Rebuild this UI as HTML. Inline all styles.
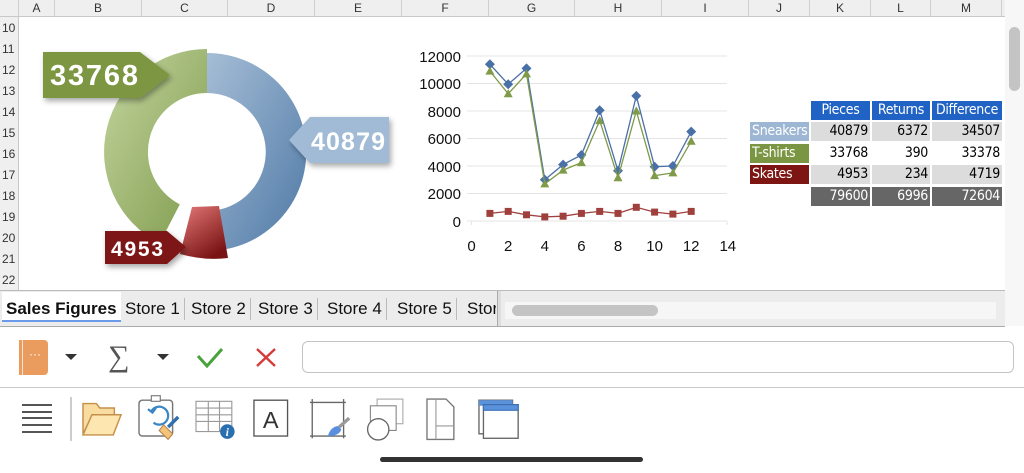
<!DOCTYPE html>
<html><head><meta charset="utf-8"><style>
*{margin:0;padding:0;box-sizing:border-box}
body{width:1024px;height:473px;overflow:hidden;background:#fff;font-family:"Liberation Sans",sans-serif;position:relative}
.abs{position:absolute}
.ch{position:absolute;top:0;height:16px;font-size:12px;color:#333;text-align:center;line-height:16px;border-right:1px solid #d0d0d0}
.rh{position:absolute;left:0;width:19px;font-size:12px;color:#333;line-height:21px;text-align:left;padding-left:2px;height:21px}
.c{position:absolute;font-size:14px;text-align:right;padding-right:2px;line-height:19px;height:19px;font-family:"DejaVu Sans Condensed","Liberation Sans",sans-serif;letter-spacing:-0.3px}
.tab{position:absolute;top:296px;height:26px;font-size:17px;line-height:26px;color:#111;border-right:1px solid #bbb;padding:0 4px}
</style></head><body>
<div class="abs" style="left:0;top:0;width:1005px;height:17px;background:#efefef;border-bottom:1px solid #c8c8c8"></div>
<div class="ch" style="left:0;width:19px"></div>
<div class="ch" style="left:19px;width:36px">A</div>
<div class="ch" style="left:55px;width:87px">B</div>
<div class="ch" style="left:142px;width:86px">C</div>
<div class="ch" style="left:228px;width:87px">D</div>
<div class="ch" style="left:315px;width:87px">E</div>
<div class="ch" style="left:402px;width:87px">F</div>
<div class="ch" style="left:489px;width:86px">G</div>
<div class="ch" style="left:575px;width:87px">H</div>
<div class="ch" style="left:662px;width:87px">I</div>
<div class="ch" style="left:749px;width:61px">J</div>
<div class="ch" style="left:810px;width:61px">K</div>
<div class="ch" style="left:871px;width:60px">L</div>
<div class="ch" style="left:931px;width:71px">M</div>
<div class="abs" style="left:0;top:17px;width:19px;height:273px;background:#efefef;border-right:1px solid #c8c8c8"></div>
<div class="rh" style="top:18px">10</div><div class="rh" style="top:39px">11</div><div class="rh" style="top:60px">12</div><div class="rh" style="top:81px">13</div><div class="rh" style="top:102px">14</div><div class="rh" style="top:123px">15</div><div class="rh" style="top:144px">16</div><div class="rh" style="top:165px">17</div><div class="rh" style="top:186px">18</div><div class="rh" style="top:207px">19</div><div class="rh" style="top:228px">20</div><div class="rh" style="top:249px">21</div><div class="rh" style="top:270px">22</div>
<div class="abs" style="left:1005px;top:0;width:19px;height:326px;background:#f7f7f7"></div>
<div class="abs" style="left:1009px;top:27px;width:11px;height:64px;background:#c4c4c4;border-radius:6px"></div>

<svg class="abs" style="left:0;top:0" width="1005" height="290">
<defs>
<linearGradient id="gb" x1="0" y1="0" x2="1" y2="1"><stop offset="0" stop-color="#a9c0d8"/><stop offset="1" stop-color="#4f79a6"/></linearGradient>
<linearGradient id="gg" x1="0" y1="0" x2="1" y2="1"><stop offset="0" stop-color="#c4d5a0"/><stop offset="1" stop-color="#7e9a4a"/></linearGradient>
<linearGradient id="gr" x1="0" y1="0" x2="0.6" y2="1"><stop offset="0" stop-color="#e57a7a"/><stop offset="1" stop-color="#7a1414"/></linearGradient>
<filter id="sh" x="-20%" y="-20%" width="140%" height="150%"><feDropShadow dx="2" dy="3" stdDeviation="3" flood-opacity="0.35"/></filter>
</defs>
<path d="M207,53 A99,99 0 1 1 198.4,250.6 L201.9,210.8 A59,59 0 1 0 207,93 Z" fill="url(#gb)"/>
<path d="M159.6,243.4 A103,103 0 0 1 207,49 L207,93 A59,59 0 0 0 179.8,204.4 Z" fill="url(#gg)"/>
<path d="M192,207 L219,206 L228,258 Q205,261 180,254 Z" fill="url(#gr)"/>
<g filter="url(#sh)">
<path d="M43,52 L140,52 L170,75 L140,98 L43,98 Z" fill="#7b9642"/>
<path d="M310,117 L389,117 L389,163 L310,163 L289,140 Z" fill="#a1bbd6"/>
<path d="M105,231 L167,231 L186,247 L167,264 L105,264 Z" fill="#7d1512"/>
</g>
<text x="50" y="85" font-family="Liberation Sans" font-weight="bold" font-size="29" fill="#fff" textLength="88">33768</text>
<text x="311" y="150" font-family="Liberation Sans" font-weight="bold" font-size="25" fill="#fff" textLength="74">40879</text>
<text x="111" y="256" font-family="Liberation Sans" font-weight="bold" font-size="21" fill="#fff" textLength="52">4953</text>
<g stroke="#e4e4e4" stroke-width="1">
<line x1="467" y1="56" x2="727" y2="56"/><line x1="467" y1="83.5" x2="727" y2="83.5"/><line x1="467" y1="111" x2="727" y2="111"/><line x1="467" y1="138.5" x2="727" y2="138.5"/><line x1="467" y1="166" x2="727" y2="166"/><line x1="467" y1="193.5" x2="727" y2="193.5"/><line x1="467" y1="221" x2="727" y2="221"/>
<line x1="471.6" y1="221" x2="471.6" y2="225"/><line x1="727" y1="221" x2="727" y2="225"/>
</g>
<g font-family="Liberation Sans" font-size="15" fill="#111" text-anchor="end">
<text x="461" y="62">12000</text><text x="461" y="89">10000</text><text x="461" y="117">8000</text><text x="461" y="144">6000</text><text x="461" y="172">4000</text><text x="461" y="199">2000</text><text x="461" y="227">0</text>
</g>
<g font-family="Liberation Sans" font-size="15" fill="#111" text-anchor="middle">
<text x="471.6" y="251">0</text><text x="508.2" y="251">2</text><text x="544.8" y="251">4</text><text x="581.4" y="251">6</text><text x="618" y="251">8</text><text x="654.6" y="251">10</text><text x="691.2" y="251">12</text><text x="727.8" y="251">14</text>
</g>
<polyline fill="none" stroke="#4a70a8" stroke-width="1.3" points="489.9,64.3 508.2,84.2 526.5,68.4 544.8,179.8 563.1,164.6 581.4,155 599.7,110.3 618,170.8 636.3,95.9 654.6,166.7 672.9,166 691.2,131.6"/>
<path fill="#4a70a8" d="M489.9,59.3l5,5-5,5-5-5z M508.2,79.2l5,5-5,5-5-5z M526.5,63.4l5,5-5,5-5-5z M544.8,174.8l5,5-5,5-5-5z M563.1,159.6l5,5-5,5-5-5z M581.4,150l5,5-5,5-5-5z M599.7,105.3l5,5-5,5-5-5z M618,165.8l5,5-5,5-5-5z M636.3,90.9l5,5-5,5-5-5z M654.6,161.7l5,5-5,5-5-5z M672.9,161l5,5-5,5-5-5z M691.2,126.6l5,5-5,5-5-5z"/>
<polyline fill="none" stroke="#7f9a48" stroke-width="1.3" points="489.9,71.1 508.2,93.8 526.5,73.9 544.8,183.9 563.1,170.1 581.4,162.6 599.7,120.6 618,177.7 636.3,111 654.6,175.6 672.9,172.9 691.2,141.3"/>
<path fill="#7f9a48" d="M489.9,66.6l4.5,8h-9z M508.2,89.3l4.5,8h-9z M526.5,69.4l4.5,8h-9z M544.8,179.4l4.5,8h-9z M563.1,165.6l4.5,8h-9z M581.4,158.1l4.5,8h-9z M599.7,116.1l4.5,8h-9z M618,173.2l4.5,8h-9z M636.3,106.5l4.5,8h-9z M654.6,171.1l4.5,8h-9z M672.9,168.4l4.5,8h-9z M691.2,136.8l4.5,8h-9z"/>
<polyline fill="none" stroke="#a0403c" stroke-width="1.3" points="489.9,213.4 508.2,211.4 526.5,214.8 544.8,216.9 563.1,216.2 581.4,213.4 599.7,211.4 618,213.4 636.3,207.3 654.6,212.1 672.9,214.1 691.2,211.4"/>
<g fill="#a0403c">
<rect x="486.4" y="209.9" width="7" height="7"/><rect x="504.7" y="207.9" width="7" height="7"/><rect x="523" y="211.3" width="7" height="7"/><rect x="541.3" y="213.4" width="7" height="7"/><rect x="559.6" y="212.7" width="7" height="7"/><rect x="577.9" y="209.9" width="7" height="7"/><rect x="596.2" y="207.9" width="7" height="7"/><rect x="614.5" y="209.9" width="7" height="7"/><rect x="632.8" y="203.8" width="7" height="7"/><rect x="651.1" y="208.6" width="7" height="7"/><rect x="669.4" y="210.6" width="7" height="7"/><rect x="687.7" y="207.9" width="7" height="7"/>
</g>
</svg>

<div class="c" style="left:811px;top:101px;width:59px;background:#2163c4;color:#fff;text-align:center;padding:0">Pieces</div>
<div class="c" style="left:872px;top:101px;width:58px;background:#2163c4;color:#fff;text-align:center;padding:0">Returns</div>
<div class="c" style="left:932px;top:101px;width:70px;background:#2163c4;color:#fff;text-align:center;padding:0">Difference</div>
<div class="c" style="left:750px;top:122px;width:59px;background:#9db6d3;color:#fff;text-align:left;padding-left:2px">Sneakers</div>
<div class="c" style="left:750px;top:144px;width:59px;background:#7b9642;color:#fff;text-align:left;padding-left:2px">T-shirts</div>
<div class="c" style="left:750px;top:165px;width:59px;background:#7d1512;color:#fff;text-align:left;padding-left:2px">Skates</div>
<div class="c" style="left:811px;top:122px;width:59px;background:#dcdcdc">40879</div>
<div class="c" style="left:872px;top:122px;width:58px;background:#dcdcdc">6372</div>
<div class="c" style="left:932px;top:122px;width:70px;background:#dcdcdc">34507</div>
<div class="c" style="left:811px;top:144px;width:59px">33768</div>
<div class="c" style="left:872px;top:144px;width:58px">390</div>
<div class="c" style="left:932px;top:144px;width:70px">33378</div>
<div class="c" style="left:811px;top:165px;width:59px;background:#dcdcdc">4953</div>
<div class="c" style="left:872px;top:165px;width:58px;background:#dcdcdc">234</div>
<div class="c" style="left:932px;top:165px;width:70px;background:#dcdcdc">4719</div>
<div class="c" style="left:811px;top:187px;width:59px;background:#666;color:#fff">79600</div>
<div class="c" style="left:872px;top:187px;width:58px;background:#666;color:#fff">6996</div>
<div class="c" style="left:932px;top:187px;width:70px;background:#666;color:#fff">72604</div>

<div class="abs" style="left:0;top:290px;width:1005px;height:37px;background:#ececec;border-top:1px solid #bbb;border-bottom:1px solid #aaa"></div>
<div class="abs" style="left:2px;top:292px;width:119px;height:30px;background:#fff;border-bottom:2px solid #6b9be8"></div>
<div class="tab" style="left:2px;font-weight:bold;border:none">Sales Figures</div>
<div class="tab" style="left:121px;top:298px;height:22px;line-height:22px">Store 1</div>
<div class="tab" style="left:187px;top:298px;height:22px;line-height:22px">Store 2</div>
<div class="tab" style="left:254px;top:298px;height:22px;line-height:22px">Store 3</div>
<div class="tab" style="left:323px;top:298px;height:22px;line-height:22px">Store 4</div>
<div class="tab" style="left:393px;top:298px;height:22px;line-height:22px">Store 5</div>
<div class="tab" style="left:462px;top:298px;height:22px;line-height:22px;border:none;width:34px;overflow:hidden;padding-left:5px">Store 6</div>
<div class="abs" style="left:497px;top:291px;width:4px;height:35px;background:#ddd;border-left:1px solid #aaa"></div>
<div class="abs" style="left:505px;top:302px;width:491px;height:17px;background:#f6f6f6"></div>
<div class="abs" style="left:512px;top:305px;width:146px;height:11px;background:#c4c4c4;border-radius:6px"></div>

<div class="abs" style="left:19px;top:340px;width:29px;height:35px;background:#e99c5e;border-radius:0 4px 4px 0"></div>
<div class="abs" style="left:22px;top:340px;width:1px;height:35px;background:#fff;opacity:.7"></div>
<div class="abs" style="left:29px;top:347px;color:#fff;font-size:12px">···</div>
<div class="abs" style="left:65px;top:354px;border:6px solid transparent;border-top:6px solid #333;border-bottom:none"></div>
<div class="abs" style="left:108px;top:340px;font-size:30px;color:#555;font-family:'Liberation Serif',serif">∑</div>
<div class="abs" style="left:157px;top:354px;border:6px solid transparent;border-top:6px solid #333;border-bottom:none"></div>
<svg class="abs" style="left:195px;top:344px" width="90" height="28"><path d="M3,12 L12,22 L27,5" fill="none" stroke="#48a33a" stroke-width="3"/><path d="M62,5 L80,22 M80,5 L62,22" stroke="#d83a3a" stroke-width="2.4"/></svg>
<div class="abs" style="left:302px;top:341px;width:712px;height:32px;border:1px solid #c4c4c4;border-radius:6px"></div>
<div class="abs" style="left:0;top:387px;width:1024px;height:1px;background:#c8c8c8"></div>

<svg class="abs" style="left:0;top:392px" width="540" height="58">
<g stroke="#555" stroke-width="2"><line x1="22" y1="13" x2="52" y2="13"/><line x1="22" y1="20" x2="52" y2="20"/><line x1="22" y1="26" x2="52" y2="26"/><line x1="22" y1="33" x2="52" y2="33"/><line x1="22" y1="40" x2="52" y2="40"/></g>
<line x1="71" y1="5" x2="71" y2="49" stroke="#bbb" stroke-width="1.5"/>
<g transform="translate(-5.5,-3) scale(1.12)">
<path d="M79,40 L79,13 L91,13 L94,17 L107,17 L107,23 L88,23 Z" fill="#f9dca0" stroke="#c58f4a" stroke-width="1.3"/>
<path d="M79,41 L87,23 L113,23 L106,41 Z" fill="#fde6b0" stroke="#c58f4a" stroke-width="1.3"/>
</g>
<g transform="translate(-6.6,-3) scale(1.12)">
<rect x="130" y="10" width="30" height="32" rx="3" fill="#fff" stroke="#777" stroke-width="1.3"/>
<rect x="141" y="6" width="8" height="5" fill="#fff" stroke="#777"/>
<path d="M143,30 A8,8 0 1 0 141,20" fill="none" stroke="#3b86c4" stroke-width="2"/><path d="M138,18 L142,21 L145,17" fill="none" stroke="#3b86c4" stroke-width="2"/>
<path d="M152,32 L160,40 L156,45 L148,37 Z" fill="#f4c27a" stroke="#b68a4c"/><line x1="156" y1="34" x2="165" y2="25" stroke="#2f6fae" stroke-width="3"/>
</g>
<g transform="translate(-10.1,-3) scale(1.12)">
<g stroke="#999" fill="none"><rect x="184" y="11" width="32" height="27"/><line x1="184" y1="17" x2="216" y2="17"/><line x1="184" y1="23" x2="216" y2="23"/><line x1="184" y1="29" x2="216" y2="29"/><line x1="195" y1="11" x2="195" y2="38"/><line x1="205" y1="11" x2="205" y2="38"/></g>
<circle cx="212" cy="38" r="6.5" fill="#2a70b0"/><text x="212" y="42" font-size="10" font-weight="bold" font-style="italic" fill="#fff" text-anchor="middle" font-family="Liberation Serif">i</text>
</g>
<g transform="translate(-12.6,-3) scale(1.12)">
<rect x="238" y="10" width="30" height="32" fill="#fff" stroke="#555" stroke-width="1.2"/><text x="253" y="35" font-size="21" fill="#333" text-anchor="middle" font-family="Liberation Sans">A</text>
</g>
<g transform="translate(-14.8,-3) scale(1.12)">
<g stroke="#666" stroke-width="1.2"><line x1="290" y1="12" x2="322" y2="12"/><line x1="292" y1="9" x2="292" y2="44"/><line x1="290" y1="42" x2="322" y2="42"/><line x1="320" y1="9" x2="320" y2="44"/></g>
<path d="M306,42 Q308,34 315,33 L318,36 Q316,42 306,42 Z" fill="#5a8fe0"/><line x1="316" y1="34" x2="325" y2="26" stroke="#999" stroke-width="3"/>
</g>
<g transform="translate(-16,-3) scale(1.12)">
<rect x="351" y="9" width="23" height="22" fill="#fff" stroke="#aaa"/><rect x="345" y="15" width="23" height="22" fill="#fff" stroke="#888"/><circle cx="352" cy="36" r="9.5" fill="#fff" stroke="#666" stroke-width="1.2"/>
</g>
<g transform="translate(-19.9,-3) scale(1.12)">
<path d="M399,9 L416,9 L423,16 L423,45 L399,45 Z" fill="#fff" stroke="#777" stroke-width="1.2"/><line x1="407" y1="9" x2="407" y2="45" stroke="#999"/><line x1="407" y1="33" x2="423" y2="33" stroke="#999"/>
</g>
<g transform="translate(-22.8,-3) scale(1.12)">
<rect x="448" y="10" width="30" height="30" fill="#fff" stroke="#666" stroke-width="1.2"/><rect x="448" y="10" width="30" height="5" fill="#5b92dc"/>
<rect x="452" y="14" width="31" height="30" fill="#fff" stroke="#666" stroke-width="1.2"/><rect x="452" y="14" width="31" height="5" fill="#5b92dc" stroke="#3b6fb8"/>
</g>
</svg>
<div class="abs" style="left:380px;top:457px;width:263px;height:5px;background:#333;border-radius:3px"></div>
</body></html>
